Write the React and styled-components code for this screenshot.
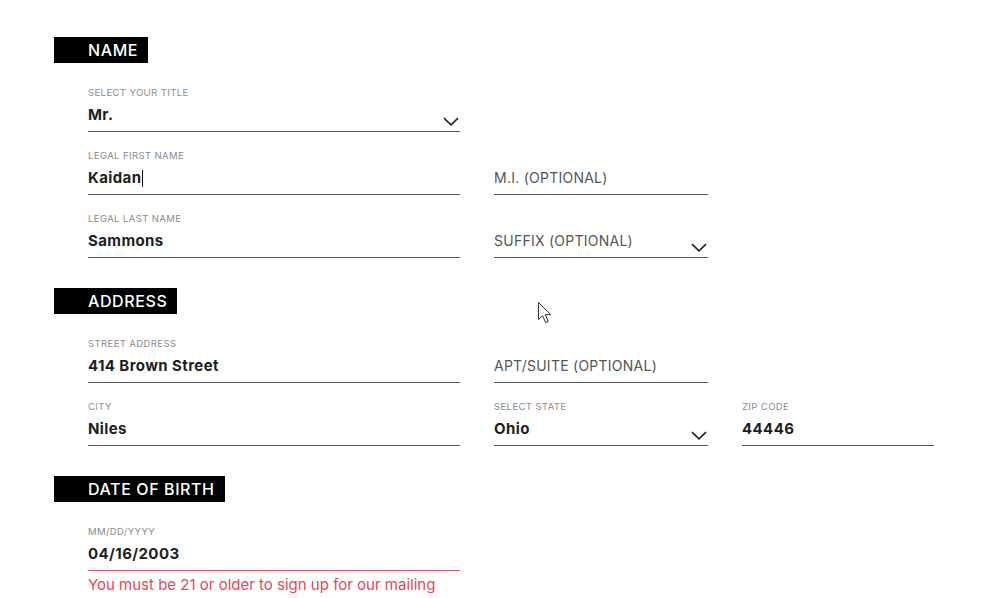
import React from 'react'
import styled, { createGlobalStyle } from 'styled-components'

const GlobalStyle = createGlobalStyle`
  html, body {
    margin: 0;
    padding: 0;
    background: #fff;
  }
  body {
    font-family: Inter, 'Liberation Sans', sans-serif;
    color: #222;
  }
`

const Page = styled.main`
  position: relative;
  width: 1006px;
  height: 598px;
  overflow: hidden;
  padding: 37px 0 0 54px;
  box-sizing: border-box;
`

const Section = styled.section`
  display: flex;
  flex-direction: column;
  align-items: flex-start;
  margin-bottom: 30px;
`

const Heading = styled.h2`
  margin: 0 0 24px;
  height: 26px;
  line-height: 26px;
  padding: 0 10px 0 34px;
  background: #000;
  color: #fff;
  font-size: 16px;
  font-weight: 500;
  letter-spacing: 0.6px;
`

const Grid = styled.div`
  display: grid;
  grid-template-columns: 372px 214px 192px;
  column-gap: 34px;
  row-gap: 18px;
  margin-left: 34px;
`

const Field = styled.div`
  position: relative;
  grid-column: ${p => p.$col || 'auto'};
  height: 45px;
  box-sizing: border-box;
  border-bottom: 1px solid ${p => (p.$error ? '#ea5a66' : '#5a5a5a')};
  padding-bottom: 6px;
`

const Label = styled.div`
  height: 12px;
  line-height: 12px;
  margin-bottom: 6px;
  font-size: 9.5px;
  letter-spacing: 0.4px;
  color: #8a8a8a;
  text-transform: uppercase;
`

const Value = styled.div`
  height: 20px;
  line-height: 20px;
  font-size: ${p => (p.$placeholder ? '14px' : '15px')};
  font-weight: ${p => (p.$placeholder ? 400 : 700)};
  letter-spacing: ${p => (p.$placeholder ? '0.25px' : '0.4px')};
  color: ${p => (p.$placeholder ? '#555' : '#1e1e1e')};
  display: flex;
  align-items: center;
`

const Caret = styled.span`
  display: inline-block;
  width: 1px;
  height: 17px;
  background: #111;
  margin-left: 1px;
`

const Chevron = styled.svg`
  position: absolute;
  right: 1px;
  bottom: 5px;
  width: 16px;
  height: 9px;
`

const ErrorText = styled.p`
  margin: 4px 0 0 34px;
  font-size: 15px;
  color: #e8475a;
`

const Pointer = styled.svg`
  position: absolute;
  left: 537px;
  top: 301px;
  width: 16px;
  height: 24px;
`

const Arrow = () => (
  <Chevron viewBox="0 0 16 9" fill="none">
    <path d="M1 1.2 L8 7.8 L15 1.2" stroke="#222" strokeWidth="1.6" />
  </Chevron>
)

const Input = ({ label, value, placeholder, col, select, caret, error }) => (
  <Field $col={col} $error={error}>
    <Label>{label || '\u00a0'}</Label>
    {placeholder ? (
      <Value $placeholder>{placeholder}</Value>
    ) : (
      <Value>
        {value}
        {caret && <Caret />}
      </Value>
    )}
    {select && <Arrow />}
  </Field>
)

const App = () => {
  return (
    <Page>
      <GlobalStyle />
      <Section>
        <Heading>NAME</Heading>
        <Grid>
          <Input label="Select your title" value="Mr." select col="1" />
          <Input label="Legal first name" value="Kaidan" caret col="1" />
          <Input placeholder="M.I. (OPTIONAL)" col="2" />
          <Input label="Legal last name" value="Sammons" col="1" />
          <Input placeholder="SUFFIX (OPTIONAL)" select col="2" />
        </Grid>
      </Section>
      <Section>
        <Heading>ADDRESS</Heading>
        <Grid>
          <Input label="Street address" value="414 Brown Street" col="1" />
          <Input placeholder="APT/SUITE (OPTIONAL)" col="2" />
          <Input label="City" value="Niles" col="1" />
          <Input label="Select state" value="Ohio" select col="2" />
          <Input label="Zip code" value="44446" col="3" />
        </Grid>
      </Section>
      <Section>
        <Heading>DATE OF BIRTH</Heading>
        <Grid>
          <Input label="MM/DD/YYYY" value="04/16/2003" error col="1" />
        </Grid>
        <ErrorText>You must be 21 or older to sign up for our mailing</ErrorText>
      </Section>
      <Pointer viewBox="0 0 16 24">
        <path
          d="M1.5 1.5 L1.5 18.5 L5.6 14.6 L8.6 21.6 L11.2 20.5 L8.3 13.6 L13.8 13.6 Z"
          fill="#fff"
          stroke="#333"
          strokeWidth="1"
          strokeLinejoin="round"
        />
      </Pointer>
    </Page>
  )
}

export default App
